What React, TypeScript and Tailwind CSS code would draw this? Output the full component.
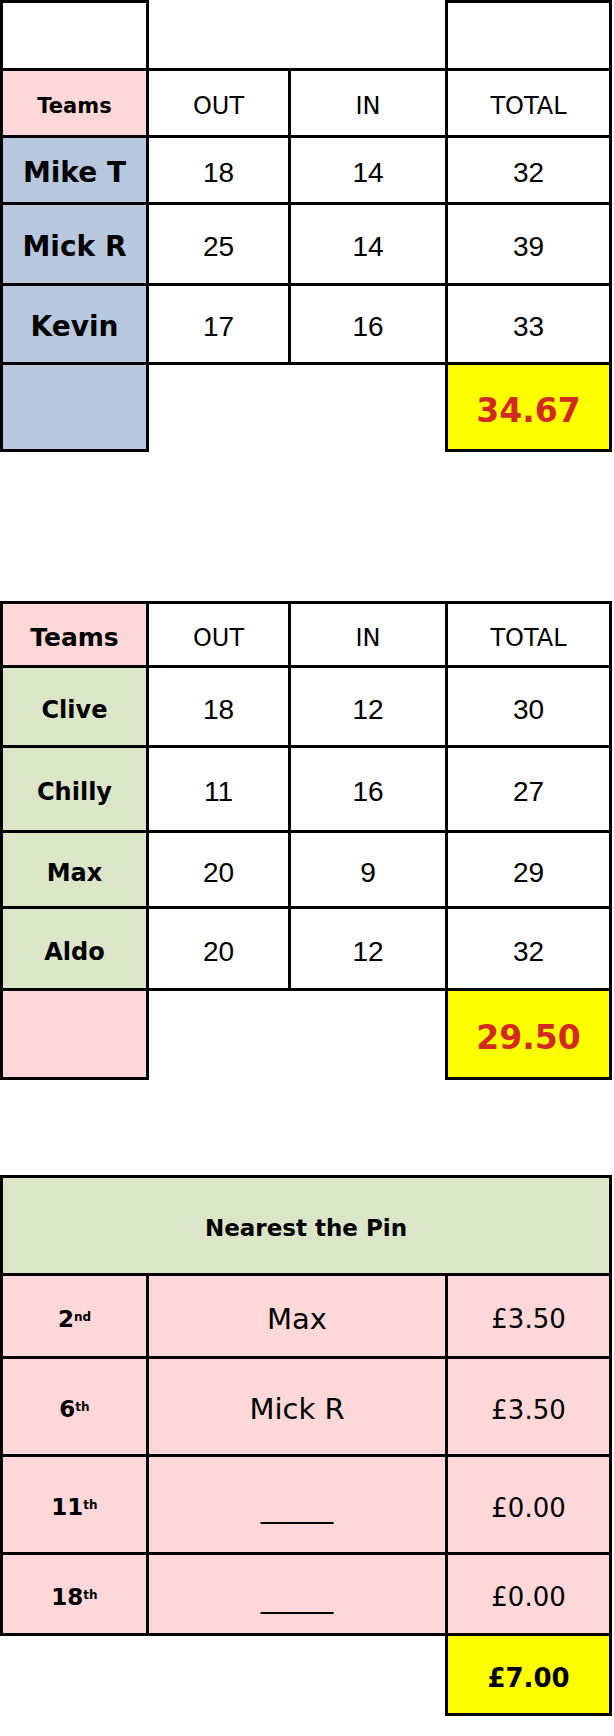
const line = "border-[3px] border-black pt-[6px]";
const comic = "font-['Comic_Sans_MS','DejaVu_Sans',sans-serif]";
const arial = "font-['Liberation_Sans',Arial,sans-serif]";

const firstTeam = [
  { name: "Mike T", out: 18, inn: 14, total: 32, h: "h-[67px]" },
  { name: "Mick R", out: 25, inn: 14, total: 39, h: "h-[81px]" },
  { name: "Kevin", out: 17, inn: 16, total: 33, h: "h-[79px]" },
];

const secondTeam = [
  { name: "Clive", out: 18, inn: 12, total: 30, h: "h-[80px]" },
  { name: "Chilly", out: 11, inn: 16, total: 27, h: "h-[85px]" },
  { name: "Max", out: 20, inn: 9, total: 29, h: "h-[76px]" },
  { name: "Aldo", out: 20, inn: 12, total: 32, h: "h-[82px]" },
];

const pins = [
  { hole: "2", suffix: "nd", winner: "Max", prize: "£3.50", h: "h-[83px]" },
  { hole: "6", suffix: "th", winner: "Mick R", prize: "£3.50", h: "h-[98px]" },
  { hole: "11", suffix: "th", winner: "_____", prize: "£0.00", h: "h-[98px]" },
  { hole: "18", suffix: "th", winner: "_____", prize: "£0.00", h: "h-[81px]" },
];

function Cols() {
  return (
    <colgroup>
      <col className="w-[146px]" />
      <col className="w-[142px]" />
      <col className="w-[157px]" />
      <col className="w-[164px]" />
    </colgroup>
  );
}

function HeaderRow({ big, h }: { big?: boolean; h: string }) {
  return (
    <tr className={h}>
      <td className={`${line} bg-[#fed8d8] font-bold ${big ? "text-[25px]" : "text-[21px]"}`}>Teams</td>
      <td className={`${line} text-[24px]`}>OUT</td>
      <td className={`${line} text-[24px]`}>IN</td>
      <td className={`${line} text-[24px]`}>TOTAL</td>
    </tr>
  );
}

function ScoreRow({
  name,
  out,
  inn,
  total,
  h,
  tint,
  nameSize,
}: {
  name: string;
  out: number;
  inn: number;
  total: number;
  h: string;
  tint: string;
  nameSize: string;
}) {
  return (
    <tr className={h}>
      <td className={`${line} ${tint} ${nameSize} font-bold`}>{name}</td>
      <td className={`${line} ${arial} text-[28px]`}>{out}</td>
      <td className={`${line} ${arial} text-[28px]`}>{inn}</td>
      <td className={`${line} ${arial} text-[28px]`}>{total}</td>
    </tr>
  );
}

function AverageRow({ h, tint, value }: { h: string; tint: string; value: string }) {
  return (
    <tr className={h}>
      <td className={`${line} ${tint}`} />
      <td colSpan={2} />
      <td className={`${line} bg-[#ffff00] font-['DejaVu_Sans',sans-serif] text-[33px] font-bold text-[#d22a22]`}>
        {value}
      </td>
    </tr>
  );
}

export default function App() {
  return (
    <div className={`flex w-[614px] flex-col bg-white pb-[20px] text-black ${comic}`}>
      <table className="w-[612px] table-fixed text-center leading-none">
        <Cols />
        <tbody>
          <tr className="h-[68px]">
            <td className={`${line} bg-white`} />
            <td colSpan={2} />
            <td className={line} />
          </tr>
          <HeaderRow h="h-[67px]" />
          {firstTeam.map((p) => (
            <ScoreRow key={p.name} {...p} tint="bg-[#b7c8de]" nameSize="text-[28px]" />
          ))}
          <AverageRow h="h-[87px]" tint="bg-[#b7c8de]" value="34.67" />
        </tbody>
      </table>

      <table className="mt-[149px] w-[612px] table-fixed text-center leading-none">
        <Cols />
        <tbody>
          <HeaderRow big h="h-[64px]" />
          {secondTeam.map((p) => (
            <ScoreRow key={p.name} {...p} tint="bg-[#dbe5c8]" nameSize="text-[24px]" />
          ))}
          <AverageRow h="h-[89px]" tint="bg-[#fed8d8]" value="29.50" />
        </tbody>
      </table>

      <table className="mt-[95px] w-[612px] table-fixed text-center leading-none">
        <Cols />
        <tbody>
          <tr className="h-[98px]">
            <td colSpan={4} className={`${line} bg-[#dbe5c8] text-[23px] font-bold`}>
              Nearest the Pin
            </td>
          </tr>
          {pins.map((p) => (
            <tr key={p.hole} className={p.h}>
              <td className={`${line} bg-[#fed8d8] text-[23px] font-bold`}>
                {p.hole}
                <sup className="text-[12px]">{p.suffix}</sup>
              </td>
              <td colSpan={2} className={`${line} bg-[#fed8d8] text-[29px]`}>
                {p.winner}
              </td>
              <td className={`${line} bg-[#fed8d8] text-[26px]`}>{p.prize}</td>
            </tr>
          ))}
          <tr className="h-[80px]">
            <td colSpan={3} />
            <td className={`${line} bg-[#ffff00] text-[26px] font-bold`}>£7.00</td>
          </tr>
        </tbody>
      </table>
    </div>
  );
}
